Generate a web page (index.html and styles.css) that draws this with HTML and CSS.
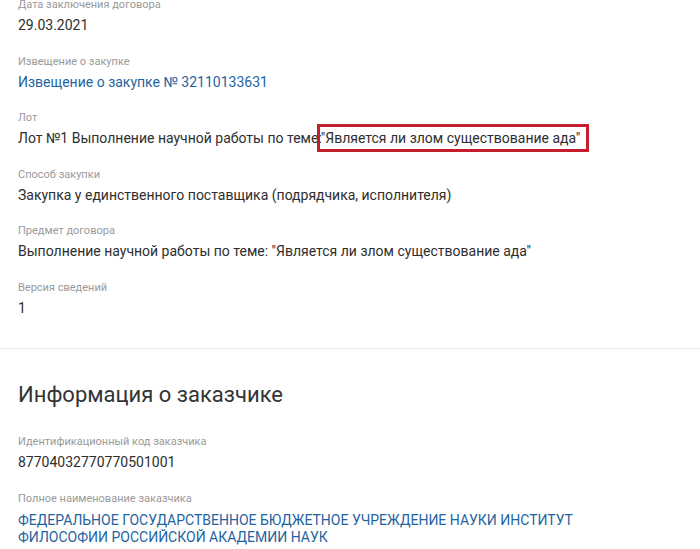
FILE: index.html
```html
<!DOCTYPE html>
<html lang="ru">
<head>
    <meta charset="UTF-8">
    <title>Сведения о договоре</title>
    <link rel="stylesheet" href="styles.css">
</head>
<body>
    <div class="section">
        <div class="field">
            <div class="label">Дата заключения договора</div>
            <div class="value">29.03.2021</div>
        </div>
        <div class="field">
            <div class="label">Извещение о закупке</div>
            <div class="value"><a class="link" href="#">Извещение о закупке № 32110133631</a></div>
        </div>
        <div class="field">
            <div class="label">Лот</div>
            <div class="value">Лот №1 Выполнение научной работы по теме:<span class="marked">"Является ли злом существование ада"</span></div>
        </div>
        <div class="field">
            <div class="label">Способ закупки</div>
            <div class="value">Закупка у единственного поставщика (подрядчика, исполнителя)</div>
        </div>
        <div class="field">
            <div class="label">Предмет договора</div>
            <div class="value">Выполнение научной работы по теме: "Является ли злом существование ада"</div>
        </div>
        <div class="field">
            <div class="label">Версия сведений</div>
            <div class="value">1</div>
        </div>
    </div>

    <div class="section customer">
        <h2 class="title">Информация о заказчике</h2>
        <div class="field">
            <div class="label">Идентификационный код заказчика</div>
            <div class="value">87704032770770501001</div>
        </div>
        <div class="field">
            <div class="label">Полное наименование заказчика</div>
            <div class="value name"><a class="link" href="#">ФЕДЕРАЛЬНОЕ ГОСУДАРСТВЕННОЕ БЮДЖЕТНОЕ УЧРЕЖДЕНИЕ НАУКИ ИНСТИТУТ ФИЛОСОФИИ РОССИЙСКОЙ АКАДЕМИИ НАУК</a></div>
        </div>
    </div>
</body>
</html>
```

FILE: styles.css
```css
* {
    margin: 0;
    padding: 0;
    box-sizing: border-box;
}

body {
    font-family: Roboto, "Noto Sans", sans-serif;
    background: #fff;
    color: #333;
    overflow: hidden;
}

.section {
    padding: 0 18px 12px;
    margin-top: -3px;
}

.customer {
    margin-top: 0;
    padding-top: 32px;
    border-top: 1px solid #e6e6e6;
}

.title {
    font-size: 22px;
    font-weight: 400;
    line-height: 28px;
    color: #333;
    margin-bottom: 25px;
}

.field {
    margin-bottom: 18.5px;
}

.label {
    font-size: 11px;
    line-height: 15px;
    color: #9a9a9a;
    margin-bottom: 4px;
}

.value {
    font-size: 14px;
    line-height: 19px;
    color: #2e2e2e;
}

.value.name {
    line-height: 17px;
    padding-top: 2px;
    max-width: 560px;
}

.link {
    color: #1f64a0;
    text-decoration: none;
}

.marked {
    border: 3px solid #c41e2e;
    padding: 3px 6px 3px 1px;
    margin-left: -5px;
}
```
